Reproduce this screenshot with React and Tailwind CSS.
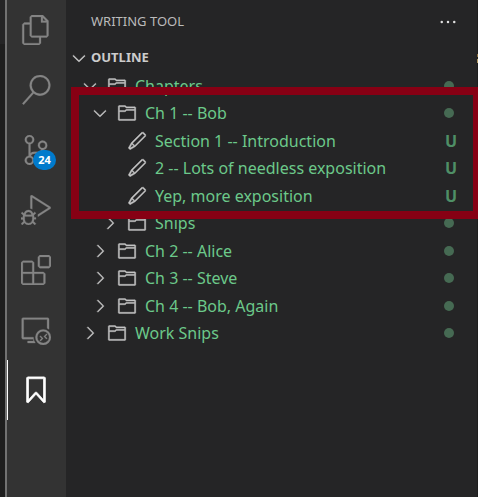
import {
  VscFiles, VscSearch, VscSourceControl, VscDebugAlt, VscExtensions,
  VscRemoteExplorer, VscBookmark, VscEdit, VscChevronDown,
  VscChevronRight, VscEllipsis,
} from "react-icons/vsc";

const views = [
  { label: "Explorer", Icon: VscFiles },
  { label: "Search", Icon: VscSearch },
  { label: "Source Control", Icon: VscSourceControl, badge: 24 },
  { label: "Run and Debug", Icon: VscDebugAlt },
  { label: "Extensions", Icon: VscExtensions },
  { label: "Remote Explorer", Icon: VscRemoteExplorer },
  { label: "Writing Tool", Icon: VscBookmark, active: true },
];

const indents = ["pl-[14px]", "pl-[24px]", "pl-[34px]"];

const rows = [
  { level: 0, text: "Chapters", open: true },
  { level: 1, text: "Ch 1 -- Bob", open: true },
  { level: 2, text: "Section 1 -- Introduction", file: true },
  { level: 2, text: "2 -- Lots of needless exposition", file: true },
  { level: 2, text: "Yep, more exposition", file: true },
  { level: 2, text: "Snips" },
  { level: 1, text: "Ch 2 -- Alice" },
  { level: 1, text: "Ch 3 -- Steve" },
  { level: 1, text: "Ch 4 -- Bob, Again" },
  { level: 0, text: "Work Snips" },
];

function FolderIcon({ className }) {
  return (
    <svg viewBox="0 0 16 16" fill="currentColor" stroke="currentColor" className={className} aria-hidden="true">
      <path
        fillRule="evenodd"
        d="M14.5 3H7.71l-.85-.85L6.51 2h-5l-.5.5v11l.5.5h13l.5-.5v-10L14.5 3zm-.51 8.49V13h-12V7h4.49l.35-.15.86-.86H14v1.5l-.01 4zm0-6.49h-6.5l-.35.15-.86.86H2v-3h4.29l.85.85.36.15H14l-.01.99z"
      />
    </svg>
  );
}

function ActivityBar() {
  return (
    <nav aria-label="Views" className="flex w-[61px] shrink-0 flex-col border-l-2 border-[#727272] bg-[#333333]">
      {views.map(({ label, Icon, badge, active }) => (
        <button
          key={label}
          aria-label={label}
          className={`relative flex h-15 w-full items-center justify-center border-l pr-[2px] ${
            active ? "border-white text-white" : "border-transparent text-[#858585]"
          }`}
        >
          <Icon className={active ? "size-[30px] stroke-[0.4]" : "size-[30px] stroke-[0.2]"} />
          {badge && (
            <span className="absolute top-[30px] right-[10px] flex h-5 w-[23px] items-center justify-center rounded-full bg-[#007acc] text-[11px] font-bold text-white">
              {badge}
            </span>
          )}
        </button>
      ))}
    </nav>
  );
}

function TreeRow({ level, text, open, file }) {
  const Chevron = open ? VscChevronDown : VscChevronRight;
  const Icon = file ? VscEdit : FolderIcon;
  return (
    <li className="flex">
      <button className={`flex w-full items-center pr-5 text-left ${indents[level]}`}>
        {file ? <span className="w-5" /> : <Chevron className="size-5 stroke-[0.3] text-[#c5c5c5]" />}
        <Icon className="mr-2 ml-[7px] size-5 stroke-[0.3] text-[#c5c5c5]" />
        <span className="flex-1 whitespace-nowrap text-[#6cc98a]">{text}</span>
        {file ? (
          <span className="font-bold text-[#4f8f66]">U</span>
        ) : (
          <span className="mr-[3px] size-[10px] rounded-full bg-[#466a53]" />
        )}
      </button>
    </li>
  );
}

export default function App() {
  return (
    <div className="flex h-screen overflow-hidden bg-[#1e1e1e] font-['Noto_Sans','Open_Sans',sans-serif] text-base">
      <div className="w-[5px] shrink-0">
        <div className="h-11 bg-[#252526]" />
      </div>
      <ActivityBar />
      <aside className="relative min-w-0 flex-1 bg-[#252526]">
        <header className="flex h-11 items-center justify-between pr-[19px] pl-[25px]">
          <h1 className="text-[13px] text-[#bbbbbb]">WRITING TOOL</h1>
          <button aria-label="More actions" className="text-[#e0e0e0]">
            <VscEllipsis className="size-5" />
          </button>
        </header>
        <button className="flex h-7 w-full items-center pl-[3px] text-[13px] font-bold text-[#cccccc]">
          <VscChevronDown className="mr-[2px] size-5 stroke-[0.3]" />
          OUTLINE
        </button>
        <ul className="grid h-[275px] auto-rows-fr">
          {rows.map((row) => (
            <TreeRow key={row.text} {...row} />
          ))}
        </ul>
        <div className="pointer-events-none absolute top-[87px] -right-1 left-[5px] h-[132px] border-8 border-[#870014]" />
      </aside>
      <div className="flex w-px shrink-0 flex-col gap-[2px] pt-[54px]">
        <span className="h-[3px] bg-[#8a6d3b]" />
        <span className="h-1 bg-[#b39a63]" />
      </div>
    </div>
  );
}
